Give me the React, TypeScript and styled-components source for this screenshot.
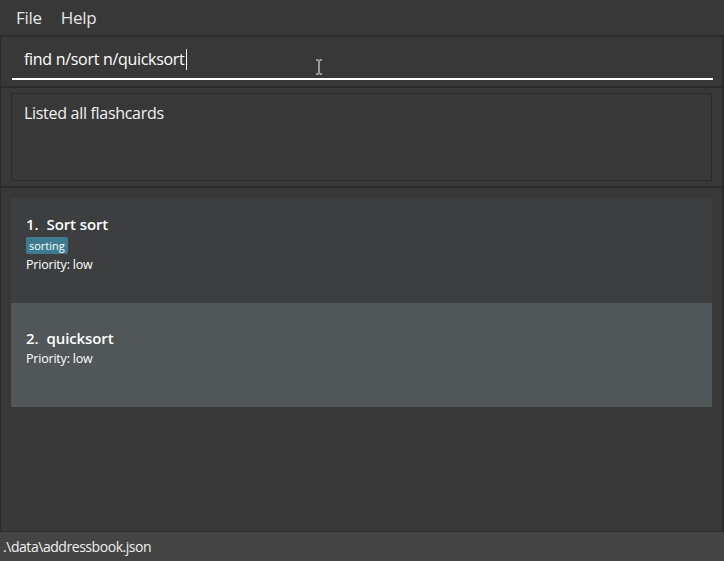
import styled, { createGlobalStyle } from 'styled-components';

const GlobalStyle = createGlobalStyle`
  html, body {
    margin: 0;
    padding: 0;
    background: #383838;
  }
  * {
    box-sizing: border-box;
  }
`;

const Window = styled.div`
  width: 724px;
  height: 561px;
  display: flex;
  flex-direction: column;
  background: #383838;
  font-family: 'Open Sans', 'Noto Sans', sans-serif;
  color: #ffffff;
  overflow: hidden;
`;

const MenuBar = styled.div`
  height: 35px;
  flex: none;
  display: flex;
  align-items: center;
  gap: 19px;
  padding: 0 0 0 16px;
  font-size: 17px;
  color: #e6e6e6;
`;

const MenuItem = styled.span`
  letter-spacing: -0.3px;
`;

const Pane = styled.div<{ $height?: number; $grow?: boolean }>`
  flex: ${(p) => (p.$grow ? '1 1 auto' : 'none')};
  height: ${(p) => (p.$height ? `${p.$height}px` : 'auto')};
  border-top: 2px solid #2c2c2c;
  border-left: 1px solid #2c2c2c;
  border-right: 2px solid #2c2c2c;
  padding: 0 10px 0 10px;
  display: flex;
  flex-direction: column;
`;

const CommandField = styled.div`
  position: relative;
  height: 43px;
  margin: 0 -1px 0 1px;
  border-bottom: 2px solid #ffffff;
  display: flex;
  align-items: flex-end;
  padding: 0 0 8px 12px;
  font-size: 16px;
  color: #ffffff;
  letter-spacing: -0.3px;
`;

const Caret = styled.span`
  display: inline-block;
  width: 1px;
  height: 21px;
  background: #ffffff;
  margin-left: 1px;
  vertical-align: -5px;
`;

const MousePointer = styled.svg`
  position: absolute;
  left: 303px;
  top: 22px;
`;

const ResultBox = styled.div`
  margin: 5px 0;
  height: 88px;
  border: 1px solid #2a2a2a;
  padding: 8px 12px;
  font-size: 16px;
  color: #f2f2f2;
  letter-spacing: -0.3px;
`;

const CardList = styled.div`
  padding-top: 10px;
  display: flex;
  flex-direction: column;
`;

const Card = styled.div<{ $odd: boolean }>`
  height: ${(p) => (p.$odd ? 104 : 105)}px;
  background: ${(p) => (p.$odd ? '#515658' : '#3c3e3f')};
  padding: ${(p) => (p.$odd ? '25px' : '16px')} 15px 0 15px;
  display: flex;
  flex-direction: column;
  align-items: flex-start;
  gap: 2px;
`;

const CardTitle = styled.div`
  font-size: 15px;
  font-weight: 600;
  color: #ffffff;
  letter-spacing: -0.1px;
  display: flex;
  gap: 8px;
`;

const Tag = styled.span`
  background: #3e7b91;
  color: #ffffff;
  font-size: 11px;
  line-height: 17px;
  padding: 0 3px;
  border-radius: 2px;
  margin-top: 1px;
`;

const Detail = styled.div`
  font-size: 12.5px;
  color: #ffffff;
  letter-spacing: -0.2px;
`;

const StatusBar = styled.div`
  height: 30px;
  flex: none;
  background: #444444;
  border-top: 1px solid #2c2c2c;
  display: flex;
  align-items: center;
  padding-left: 3px;
  font-size: 14px;
  color: #f0f0f0;
  letter-spacing: -0.45px;
`;

const cards = [
  { name: 'Sort sort', tags: ['sorting'], priority: 'low' },
  { name: 'quicksort', tags: [] as string[], priority: 'low' },
];

export default function App() {
  return (
    <>
      <GlobalStyle />
      <Window>
        <MenuBar>
          <MenuItem>File</MenuItem>
          <MenuItem>Help</MenuItem>
        </MenuBar>
        <Pane $height={51}>
          <CommandField>
            <span>
              find n/sort n/quicksort
              <Caret />
            </span>
            <MousePointer width="8" height="16" viewBox="0 0 8 16">
              <path d="M1 1h2.5M4.5 1H7M4 1.5v13M1 15h2.5M4.5 15H7" stroke="#ffffff" strokeWidth="1" fill="none" />
            </MousePointer>
          </CommandField>
        </Pane>
        <Pane $height={100}>
          <ResultBox>Listed all flashcards</ResultBox>
        </Pane>
        <Pane $grow>
          <CardList>
            {cards.map((c, i) => (
              <Card key={i} $odd={i % 2 === 1}>
                <CardTitle>
                  <span>{i + 1}.</span>
                  <span>{c.name}</span>
                </CardTitle>
                {c.tags.map((t) => (
                  <Tag key={t}>{t}</Tag>
                ))}
                <Detail>Priority: {c.priority}</Detail>
              </Card>
            ))}
          </CardList>
        </Pane>
        <StatusBar>.\data\addressbook.json</StatusBar>
      </Window>
    </>
  );
}
